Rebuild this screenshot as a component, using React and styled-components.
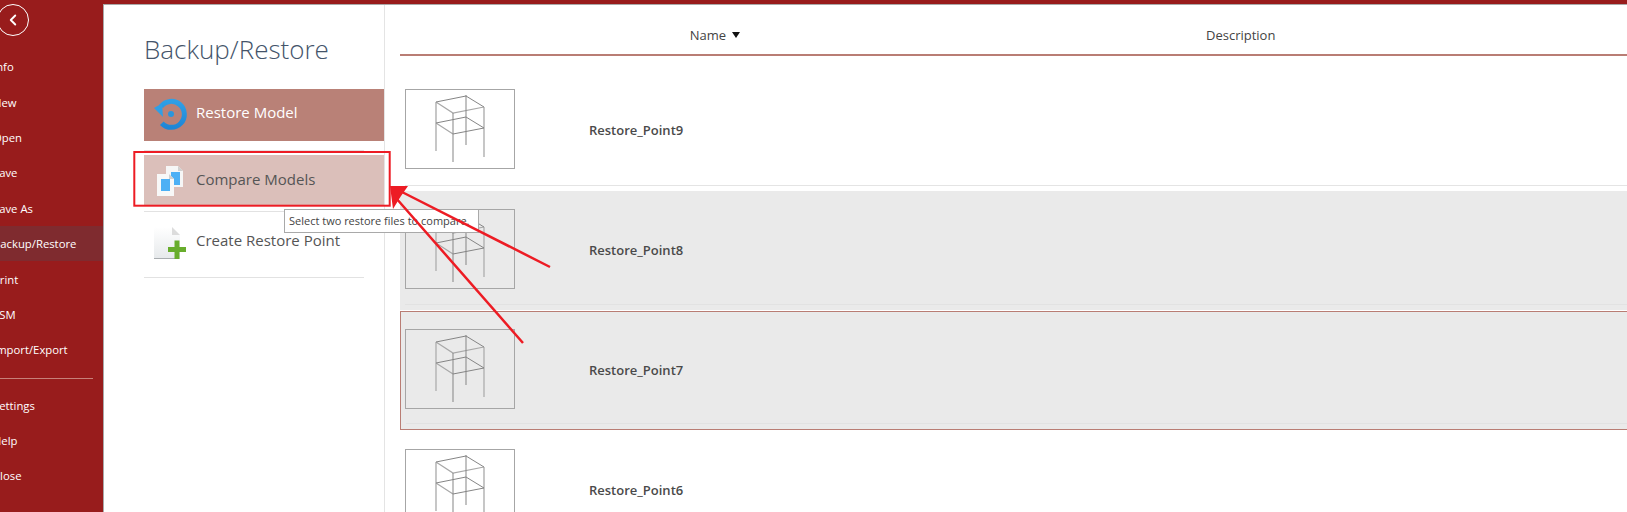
import React from "react";
import styled, { createGlobalStyle } from "styled-components";
import { ChevronLeft } from "lucide-react";

const GlobalStyle = createGlobalStyle`
  html, body {
    margin: 0;
    height: 100%;
    overflow: hidden;
    background: #fff;
    font-family: "Open Sans", "Liberation Sans", sans-serif;
  }
`;

const Page = styled.div`
  position: relative;
  width: 1627px;
  height: 512px;
  overflow: hidden;
  display: flex;
  flex-direction: column;
`;

const TopBar = styled.div`
  height: 4px;
  flex: none;
  background: #981c1c;
`;

const Shell = styled.div`
  flex: 1;
  display: flex;
  min-height: 0;
`;

const Sidebar = styled.nav`
  width: 103px;
  flex: none;
  background: #981c1c;
  border-right: 1px solid #a9a9a9;
  overflow: hidden;
  display: flex;
  flex-direction: column;
`;

const BackButton = styled.div`
  width: 30px;
  height: 30px;
  margin: 0 0 13px -3px;
  flex: none;
  border: 1px solid #fff;
  border-radius: 50%;
  display: flex;
  align-items: center;
  justify-content: center;
  color: #fff;
`;

const NavItem = styled.div`
  height: 35.4px;
  flex: none;
  display: flex;
  align-items: center;
  background: ${props => (props.$active ? "#7f2b2f" : "transparent")};
  color: #fff;
  font-size: 11.3px;
  white-space: nowrap;
`;

const NavLabel = styled.span`
  margin-left: -7px;
`;

const NavRule = styled.div`
  height: 1px;
  flex: none;
  background: #c78079;
  margin: 10px 10px 9px 0;
`;

const Content = styled.div`
  flex: 1;
  display: flex;
  min-width: 0;
  border-top: 1px solid #a9a9a9;
`;

const Actions = styled.div`
  width: 281px;
  flex: none;
  box-sizing: border-box;
  padding: 0 0 0 40px;
  border-right: 1px solid #e4e4e4;
`;

const Title = styled.h1`
  margin: 25px 0 21px;
  height: 38px;
  line-height: 38px;
  font-size: 26px;
  font-weight: 300;
  color: #44546a;
`;

const ActionRow = styled.div`
  height: ${props => props.$height}px;
  display: flex;
  align-items: center;
  gap: 3px;
  padding-left: 9px;
  background: ${props => props.$bg || "transparent"};
  color: ${props => props.$color || "#555"};
  font-size: 15px;
  box-sizing: border-box;
`;

const ActionLabel = styled.span`
  margin-bottom: ${props => props.$lift || 0}px;
`;

const ActionIcon = styled.svg`
  width: 40px;
  height: 40px;
  flex: none;
  display: block;
`;

const ActionRule = styled.div`
  height: 1px;
  width: 220px;
  background: #e2e2e2;
  margin: ${props => props.$margin};
`;

const List = styled.div`
  flex: 1;
  padding-left: 15px;
  min-width: 0;
`;

const ListHeader = styled.div`
  height: 38px;
  padding-top: 11px;
  display: grid;
  grid-template-columns: 340px 1fr;
  align-items: center;
  border-bottom: 2px solid #b97d74;
  color: #444;
  font-size: 13px;
`;

const NameHead = styled.div`
  display: flex;
  align-items: center;
  justify-content: flex-end;
  gap: 6px;
`;

const SortMark = styled.span`
  width: 0;
  height: 0;
  border-left: 4px solid transparent;
  border-right: 4px solid transparent;
  border-top: 6px solid #111;
`;

const DescHead = styled.div`
  padding-left: 466px;
`;

const Rows = styled.div`
  margin-top: 15px;
  display: flex;
  flex-direction: column;
`;

const Row = styled.div`
  height: ${props => (props.$shade ? 119 : 120)}px;
  margin-bottom: ${props => (props.$shade ? 1 : 0)}px;
  flex: none;
  box-sizing: border-box;
  position: relative;
  padding: ${props => (props.$picked ? "17px 0 0 4px" : "18px 0 0 5px")};
  background: ${props => (props.$shade ? "#eaeaea" : "#fff")};
  border: ${props => (props.$picked ? "1px solid #b97d74" : "none")};
  border-right: none;
  display: flex;
  gap: 74px;
`;

const RowRule = styled.div`
  position: absolute;
  left: 5px;
  right: 0;
  bottom: 5px;
  height: 1px;
  background: ${props => (props.$shade ? "#e2e2e2" : "#e4e4e4")};
`;

const Thumb = styled.div`
  width: 108px;
  height: 78px;
  flex: none;
  border: 1px solid #a6a6a6;
`;

const RowName = styled.div`
  height: 82px;
  display: flex;
  align-items: center;
  font-size: 13px;
  font-weight: 600;
  color: #4a4a4a;
`;

const Annotations = styled.svg`
  position: absolute;
  left: 0;
  top: 0;
  width: 1627px;
  height: 512px;
  pointer-events: none;
`;

const Tooltip = styled.div`
  position: absolute;
  left: 284px;
  top: 209px;
  width: 195px;
  height: 24px;
  box-sizing: border-box;
  border: 1px solid #a9a9a9;
  background: #fff;
  color: #444;
  font-size: 11px;
  line-height: 22px;
  padding-left: 4px;
  white-space: nowrap;
`;

const navTop = ["Info", "New", "Open", "Save", "Save As", "Backup/Restore", "Print", "SSM", "Import/Export"];
const navBottom = ["Settings", "Help", "Close"];
const points = ["Restore_Point9", "Restore_Point8", "Restore_Point7", "Restore_Point6"];

const Frame = () => (
  <svg width="108" height="78" viewBox="0 0 108 78" fill="none" style={{ display: "block" }}>
    <path d="M30 12v49M78 17v50" stroke="#b9b9b9" strokeWidth="1.6" />
    <path d="M30 12 47 23 78 17M30 33 47 44" stroke="#a8a8a8" strokeWidth="1.2" />
    <path d="M47 23v49M60 5v50M30 12 60 6 78 17M30 33 60 27 78 38 47 44" stroke="#858585" strokeWidth="1" />
  </svg>
);

const RestoreIcon = () => (
  <ActionIcon viewBox="0 0 40 40" fill="none">
    <defs>
      <linearGradient id="ringFade" x1="0" y1="0" x2="0" y2="1">
        <stop offset="0" stopColor="#2f9fe6" />
        <stop offset="1" stopColor="#1f86d6" />
      </linearGradient>
    </defs>
    <path d="M8 11.5A13 13 0 1 1 8.8 28.2" stroke="url(#ringFade)" strokeWidth="5" />
    <path d="M1 13 9 8.5 10 22Z" fill="#2f9fe6" />
    <circle cx="18" cy="19" r="3" fill="#2a96dd" />
  </ActionIcon>
);

const CompareIcon = () => (
  <ActionIcon viewBox="0 0 40 40" fill="none">
    <path d="M13 6h12l5 5v16H13Z" fill="#f6f6f6" />
    <path d="M25 6l5 5h-5Z" fill="#d0d0d0" />
    <path d="M18 12h9v13h-9Z" fill="#4db0f5" />
    <path d="M4 14h12l5 5v17H4Z" fill="#f8f8f8" />
    <path d="M16 14l5 5h-5Z" fill="#d0d0d0" />
    <path d="M8 19h9v12H8Z" fill="#4db0f5" />
  </ActionIcon>
);

const CreateIcon = () => (
  <ActionIcon viewBox="0 0 40 40" fill="none">
    <defs>
      <linearGradient id="docFade" x1="0" y1="0" x2="0" y2="1">
        <stop offset="0" stopColor="#ffffff" />
        <stop offset="1" stopColor="#e6e9eb" />
      </linearGradient>
    </defs>
    <path d="M1 2h18l8 8v24H1Z" fill="url(#docFade)" />
    <path d="M1 33h23v1H1Z" fill="#a9adb0" />
    <path d="M19 2l8 8h-8Z" fill="#dcdcdc" />
    <path d="M21.5 15.5h5v6.5h6.5v5h-6.5v7h-5v-7h-6.5v-5h6.5Z" fill="#68ad2c" />
  </ActionIcon>
);

export default function App() {
  return (
    <Page>
      <GlobalStyle />
      <TopBar />
      <Shell>
        <Sidebar>
          <BackButton>
            <ChevronLeft size={18} strokeWidth={2.5} />
          </BackButton>
          {navTop.map(label => (
            <NavItem key={label} $active={label === "Backup/Restore"}>
              <NavLabel>{label}</NavLabel>
            </NavItem>
          ))}
          <NavRule />
          {navBottom.map(label => (
            <NavItem key={label}>
              <NavLabel>{label}</NavLabel>
            </NavItem>
          ))}
        </Sidebar>
        <Content>
          <Actions>
            <Title>Backup/Restore</Title>
            <ActionRow $height={52} $bg="#b98177" $color="#fff">
              <RestoreIcon />
              <ActionLabel $lift={6}>Restore Model</ActionLabel>
            </ActionRow>
            <ActionRule $margin="9px 0 4px" />
            <ActionRow $height={50} $bg="#dbbfba">
              <CompareIcon />
              <ActionLabel $lift={2}>Compare Models</ActionLabel>
            </ActionRow>
            <ActionRule $margin="6px 0 0" />
            <ActionRow $height={65}>
              <CreateIcon />
              <ActionLabel $lift={10}>Create Restore Point</ActionLabel>
            </ActionRow>
            <ActionRule $margin="0" />
          </Actions>
          <List>
            <ListHeader>
              <NameHead>
                Name
                <SortMark />
              </NameHead>
              <DescHead>Description</DescHead>
            </ListHeader>
            <Rows>
              {points.map((name, i) => (
                <Row key={name} $shade={i === 1 || i === 2} $picked={i === 2}>
                  <Thumb>
                    <Frame />
                  </Thumb>
                  <RowName>{name}</RowName>
                  <RowRule $shade={i === 1 || i === 2} />
                </Row>
              ))}
            </Rows>
          </List>
        </Content>
      </Shell>
      <Tooltip>Select two restore files to compare.</Tooltip>
      <Annotations viewBox="0 0 1627 512" fill="none">
        <rect x="134.3" y="152" width="255.4" height="53.7" stroke="#ed1c24" strokeWidth="2" />
        <path d="M550 267 400 191M523 343 396 198" stroke="#ed1c24" strokeWidth="2.5" />
        <path d="M390 186 408 186 401 196 393 209Z" fill="#ed1c24" />
      </Annotations>
    </Page>
  );
}
